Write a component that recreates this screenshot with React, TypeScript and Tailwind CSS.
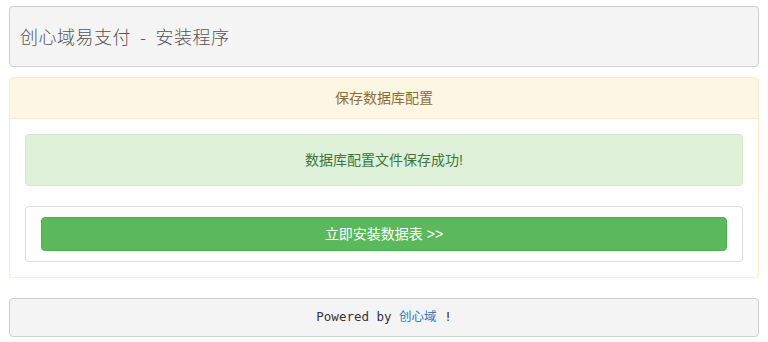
export default function App() {
  return (
    <div
      className="w-[768px] h-[342px] bg-white px-[9px] pt-[6px] text-[#333]"
      style={{ fontFamily: '"Liberation Sans", "Noto Sans CJK SC", sans-serif' }}
    >
      {/* Header */}
      <div className="h-[61px] flex items-center px-[10px] bg-[#f4f4f4] border border-[#cfcfcf] rounded-[4px]">
        <h1
          className="text-[18px] text-[#555] font-light tracking-[0.5px]"
          style={{ fontFamily: '"Noto Sans CJK SC", serif' }}
        >
          创心域易支付&nbsp; - &nbsp;安装程序
        </h1>
      </div>

      {/* Panel */}
      <div className="mt-[10px] border border-[#faebcc] rounded-[4px] bg-white">
        <div className="h-[41px] flex items-center justify-center bg-[#fcf6e2] border-b border-[#faebcc] text-[14px] text-[#8a6d3b] rounded-t-[4px]">
          保存数据库配置
        </div>
        <div className="px-[15px] pt-[15px] pb-[15px]">
          <div className="h-[52px] flex items-center justify-center bg-[#dff0d8] border border-[#d6e9c6] rounded-[4px] text-[14px] text-[#3c763d]">
            数据库配置文件保存成功!
          </div>
          <div className="mt-[20px] border border-[#ddd] rounded-[4px] px-[15px] py-[10px]">
            <div className="h-[34px] flex items-center justify-center bg-[#5cb85c] border border-[#4cae4c] rounded-[4px] text-[14px] text-white">
              立即安装数据表 &gt;&gt;
            </div>
          </div>
        </div>
      </div>

      {/* Footer */}
      <div className="mt-[20px] h-[39px] flex items-center justify-center bg-[#f4f4f4] border border-[#cfcfcf] rounded-[4px]">
        <p
          className="text-[12.5px] text-[#333]"
          style={{ fontFamily: '"DejaVu Sans Mono", "Noto Sans CJK SC", monospace' }}
        >
          Powered by <span className="text-[#337ab7]">创心域</span> !
        </p>
      </div>
    </div>
  );
}
